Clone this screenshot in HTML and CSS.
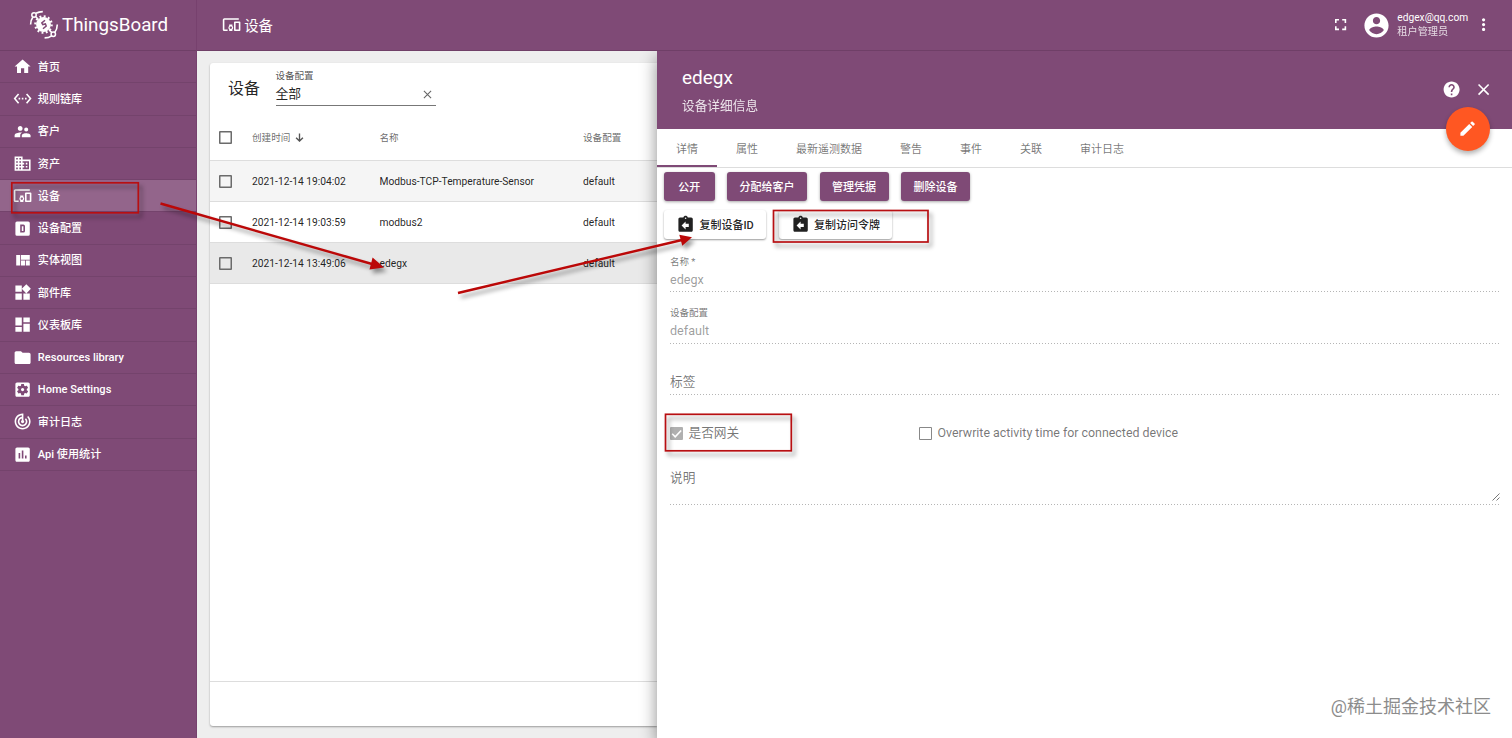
FILE: index.html
```
<!DOCTYPE html>
<html lang="zh-CN">
<head>
    <meta charset="UTF-8">
    <meta name="viewport" content="width=device-width, initial-scale=1.0">
    <title>ThingsBoard | 设备</title>
    <link rel="stylesheet" href="styles.css">
</head>
<body>
    <div class="app">
        <aside class="sidebar">
            <div class="logo">
                <svg class="logo-mark" viewBox="0 0 30 30" fill="none" stroke="#fff">
                    <circle cx="14.5" cy="14.5" r="7.4" fill="#fff" stroke="none"/>
                    <circle cx="14.5" cy="14.5" r="8.2" stroke-width="2.2" stroke-dasharray="1.9 2.39"/>
                    <path d="M16 10.2l-3.200 2.800 1 1.600 2.600-.6.8 2-3.200 2.800" stroke="#7f4a76" stroke-width="1.5"/>
                    <path d="M1.600 14.500c0-2.800.6-5 2.200-7.200M7 3.300c2-1.200 4-1.700 6.800-1.700M28.300 14.500c0 3-.8 5.600-2.600 8M22.600 25.800c-2 1.500-4.200 2.100-7 2.100" stroke-width="1.6"/>
                    <circle cx="5" cy="5" r="2.200" stroke-width="1.500"/>
                    <circle cx="24.300" cy="24.200" r="2.200" stroke-width="1.500"/>
                    <path d="M6.800 6.700l2.500 2.500M22.600 22.400l-2.500-2.500" stroke-width="1.500"/>
                </svg>
                <span>ThingsBoard</span>
            </div>
            <nav class="menu">
                <a class="menu-item">
                    <svg class="icon" viewBox="0 0 24 24"><path d="M10 20v-6h4v6h5v-8h3L12 3 2 12h3v8z"/></svg>
                    <span>首页</span>
                </a>
                <a class="menu-item">
                    <svg class="icon" viewBox="0 0 24 24"><path d="M7.770 6.760L6.230 5.480.820 12l5.410 6.520 1.540-1.280L3.420 12l4.350-5.240zM7 13h2v-2H7v2zm10-2h-2v2h2v-2zm-6 2h2v-2h-2v2zm6.770-7.520l-1.540 1.280L20.580 12l-4.350 5.240 1.540 1.280L23.180 12l-5.410-6.520z"/></svg>
                    <span>规则链库</span>
                </a>
                <a class="menu-item">
                    <svg class="icon" viewBox="0 0 24 24"><path d="M16.500 12c1.380 0 2.490-1.120 2.490-2.500S17.880 7 16.500 7C15.120 7 14 8.120 14 9.500s1.120 2.500 2.500 2.500zM9 11c1.660 0 2.990-1.340 2.990-3S10.660 5 9 5C7.340 5 6 6.340 6 8s1.340 3 3 3zm7.500 3c-1.830 0-5.500.920-5.500 2.750V19h11v-2.250c0-1.830-3.670-2.750-5.500-2.750zM9 13c-2.330 0-7 1.170-7 3.500V19h7v-2.250c0-.850.330-2.340 2.370-3.470C10.500 13.100 9.660 13 9 13z"/></svg>
                    <span>客户</span>
                </a>
                <a class="menu-item">
                    <svg class="icon" viewBox="0 0 24 24"><path d="M12 7V3H2v18h20V7H12zM6 19H4v-2h2v2zm0-4H4v-2h2v2zm0-4H4V9h2v2zm0-4H4V5h2v2zm4 12H8v-2h2v2zm0-4H8v-2h2v2zm0-4H8V9h2v2zm0-4H8V5h2v2zm10 12h-8v-2h2v-2h-2v-2h2v-2h-2V9h8v10zm-2-8h-2v2h2v-2zm0 4h-2v2h2v-2z"/></svg>
                    <span>资产</span>
                </a>
                <a class="menu-item active">
                    <svg class="icon" viewBox="0 0 24 24"><path d="M3 6h18V4H3c-1.100 0-2 .9-2 2v12c0 1.100.9 2 2 2h4v-2H3V6zm10 6H9v1.780c-.610.550-1 1.330-1 2.220s.390 1.670 1 2.220V20h4v-1.780c.610-.550 1-1.340 1-2.220s-.390-1.670-1-2.220V12zm-2 5.500c-.830 0-1.500-.670-1.500-1.500s.670-1.500 1.500-1.500 1.500.670 1.500 1.500-.670 1.500-1.500 1.500zM22 8h-6c-.5 0-1 .5-1 1v10c0 .5.5 1 1 1h6c.5 0 1-.5 1-1V9c0-.5-.5-1-1-1zm-1 10h-4v-8h4v8z"/></svg>
                    <span>设备</span>
                </a>
                <a class="menu-item">
                    <svg class="icon" viewBox="0 0 24 24"><path fill-rule="evenodd" d="M5 3h14a2 2 0 0 1 2 2v14a2 2 0 0 1-2 2H5a2 2 0 0 1-2-2V5a2 2 0 0 1 2-2zm4 4v10h4a2 2 0 0 0 2-2V9a2 2 0 0 0-2-2H9zm2 2h2v6h-2V9z"/></svg>
                    <span>设备配置</span>
                </a>
                <a class="menu-item">
                    <svg class="icon" viewBox="0 0 24 24"><path d="M10 18h5v-6h-5v6zm-6 0h5V5H4v13zm12 0h5v-6h-5v6zM10 5v6h11V5H10z"/></svg>
                    <span>实体视图</span>
                </a>
                <a class="menu-item">
                    <svg class="icon" viewBox="0 0 24 24"><path d="M13 13v8h8v-8h-8zM3 21h8v-8H3v8zM3 3v8h8V3H3zm13.660-1.310L11 7.340 16.660 13l5.660-5.660-5.660-5.650z"/></svg>
                    <span>部件库</span>
                </a>
                <a class="menu-item">
                    <svg class="icon" viewBox="0 0 24 24"><path d="M3 13h8V3H3v10zm0 8h8v-6H3v6zm10 0h8V11h-8v10zm0-18v6h8V3h-8z"/></svg>
                    <span>仪表板库</span>
                </a>
                <a class="menu-item latin">
                    <svg class="icon" viewBox="0 0 24 24"><path d="M10 4H4c-1.100 0-1.990.9-1.990 2L2 18c0 1.100.9 2 2 2h16c1.100 0 2-.9 2-2V8c0-1.100-.9-2-2-2h-8l-2-2z"/></svg>
                    <span>Resources library</span>
                </a>
                <a class="menu-item latin">
                    <svg class="icon" viewBox="0 0 24 24"><path d="M12 10c-1.100 0-2 .9-2 2s.9 2 2 2 2-.9 2-2-.9-2-2-2zm7-7H5c-1.110 0-2 .9-2 2v14c0 1.100.890 2 2 2h14c1.110 0 2-.9 2-2V5c0-1.100-.890-2-2-2zm-1.750 9c0 .230-.020.460-.050.680l1.480 1.160c.130.110.170.300.080.450l-1.400 2.420c-.090.150-.270.210-.430.150l-1.740-.700c-.360.280-.760.510-1.180.690l-.260 1.850c-.030.170-.180.300-.350.300h-2.800c-.170 0-.320-.130-.350-.290l-.260-1.850c-.430-.180-.820-.410-1.180-.690l-1.740.700c-.160.060-.340 0-.430-.150l-1.400-2.420c-.090-.150-.050-.340.080-.450l1.480-1.160c-.030-.230-.050-.460-.050-.690s.020-.460.050-.680l-1.480-1.160c-.130-.110-.170-.300-.080-.450l1.400-2.420c.090-.150.270-.210.430-.150l1.740.700c.360-.280.760-.510 1.180-.690l.260-1.850c.030-.170.180-.300.350-.300h2.800c.170 0 .320.130.350.290l.260 1.850c.430.180.820.410 1.180.690l1.740-.700c.160-.060.340 0 .430.150l1.400 2.420c.090.150.050.340-.080.450l-1.480 1.160c.030.230.050.460.050.690z"/></svg>
                    <span>Home Settings</span>
                </a>
                <a class="menu-item">
                    <svg class="icon" viewBox="0 0 24 24"><path d="M19.070 4.930l-1.410 1.410C19.100 7.790 20 9.790 20 12c0 4.420-3.580 8-8 8s-8-3.580-8-8c0-4.080 3.050-7.440 7-7.930v2.020C8.160 6.570 6 9.030 6 12c0 3.310 2.690 6 6 6s6-2.690 6-6c0-1.660-.670-3.160-1.760-4.240l-1.410 1.410C15.550 9.900 16 10.900 16 12c0 2.210-1.790 4-4 4s-4-1.790-4-4c0-1.860 1.280-3.410 3-3.860v2.140c-.6.350-1 .980-1 1.720 0 1.100.9 2 2 2s2-.9 2-2c0-.740-.4-1.380-1-1.720V2h-1C6.480 2 2 6.480 2 12s4.480 10 10 10 10-4.480 10-10c0-2.760-1.120-5.260-2.930-7.070z"/></svg>
                    <span>审计日志</span>
                </a>
                <a class="menu-item">
                    <svg class="icon" viewBox="0 0 24 24"><path d="M19 3H5c-1.100 0-2 .9-2 2v14c0 1.100.9 2 2 2h14c1.100 0 2-.9 2-2V5c0-1.100-.9-2-2-2zM9 17H7v-7h2v7zm4 0h-2V7h2v10zm4 0h-2v-4h2v4z"/></svg>
                    <span>Api 使用统计</span>
                </a>
            </nav>
        </aside>

        <div class="main">
            <header class="topbar">
                <div class="breadcrumb">
                    <svg class="icon" viewBox="0 0 24 24"><path d="M3 6h18V4H3c-1.100 0-2 .9-2 2v12c0 1.100.9 2 2 2h4v-2H3V6zm10 6H9v1.780c-.610.550-1 1.330-1 2.220s.390 1.670 1 2.220V20h4v-1.780c.610-.550 1-1.340 1-2.220s-.390-1.670-1-2.220V12zm-2 5.500c-.830 0-1.500-.670-1.500-1.500s.670-1.500 1.500-1.500 1.500.670 1.500 1.500-.670 1.500-1.500 1.500zM22 8h-6c-.5 0-1 .5-1 1v10c0 .5.5 1 1 1h6c.5 0 1-.5 1-1V9c0-.5-.5-1-1-1zm-1 10h-4v-8h4v8z"/></svg>
                    <span>设备</span>
                </div>
                <div class="user-bar">
                    <svg class="icon fullscreen" viewBox="0 0 24 24"><path d="M7 14H5v5h5v-2H7v-3zm-2-4h2V7h3V5H5v5zm12 7h-3v2h5v-5h-2v3zM14 5v2h3v3h2V5h-5z"/></svg>
                    <svg class="avatar" viewBox="0 0 24 24"><path d="M12 2C6.480 2 2 6.480 2 12s4.480 10 10 10 10-4.480 10-10S17.520 2 12 2zm0 3c1.660 0 3 1.340 3 3s-1.340 3-3 3-3-1.340-3-3 1.340-3 3-3zm0 14.200c-2.500 0-4.710-1.280-6-3.220.030-1.990 4-3.080 6-3.080 1.990 0 5.970 1.090 6 3.080-1.290 1.940-3.500 3.220-6 3.220z"/></svg>
                    <div class="user-info">
                        <span>edgex@qq.com</span>
                        <span class="role">租户管理员</span>
                    </div>
                    <svg class="icon" viewBox="0 0 24 24"><path d="M12 8c1.100 0 2-.9 2-2s-.9-2-2-2-2 .9-2 2 .9 2 2 2zm0 2c-1.100 0-2 .9-2 2s.9 2 2 2 2-.9 2-2-.9-2-2-2zm0 6c-1.100 0-2 .9-2 2s.9 2 2 2 2-.9 2-2-.9-2-2-2z"/></svg>
                </div>
            </header>

            <div class="content">
                <section class="list">
                    <div class="card">
                        <div class="card-header">
                            <h2>设备</h2>
                            <div class="profile-filter">
                                <label>设备配置</label>
                                <div class="filter-value">
                                    <span>全部</span>
                                    <svg class="clear" viewBox="0 0 10 10"><path d="M1 1l8 8M9 1l-8 8"/></svg>
                                </div>
                            </div>
                        </div>
                        <div class="row head">
                            <span class="checkbox"></span>
                            <span class="sorted">创建时间
                                <svg class="arrow" viewBox="0 0 10 10"><path d="M5 .5v8.300M1.200 5.200L5 9l3.800-3.800"/></svg>
                            </span>
                            <span>名称</span>
                            <span>设备配置</span>
                        </div>
                        <div class="row hover">
                            <span class="checkbox"></span>
                            <span>2021-12-14 19:04:02</span>
                            <span>Modbus-TCP-Temperature-Sensor</span>
                            <span>default</span>
                        </div>
                        <div class="row">
                            <span class="checkbox"></span>
                            <span>2021-12-14 19:03:59</span>
                            <span>modbus2</span>
                            <span>default</span>
                        </div>
                        <div class="row current">
                            <span class="checkbox"></span>
                            <span>2021-12-14 13:49:06</span>
                            <span>edegx</span>
                            <span>default</span>
                        </div>
                        <div class="paginator"></div>
                    </div>
                </section>

                <section class="details">
                    <div class="details-header">
                        <div class="details-title">
                            <h3>edegx</h3>
                            <p>设备详细信息</p>
                        </div>
                        <div class="details-actions">
                            <svg class="icon" viewBox="0 0 24 24"><path d="M12 2C6.480 2 2 6.480 2 12s4.480 10 10 10 10-4.480 10-10S17.520 2 12 2zm1 17h-2v-2h2v2zm2.070-7.750l-.9.920C13.450 12.900 13 13.500 13 15h-2v-.5c0-1.100.450-2.100 1.170-2.830l1.240-1.260c.370-.360.590-.860.590-1.410 0-1.100-.9-2-2-2s-2 .9-2 2H8c0-2.210 1.790-4 4-4s4 1.790 4 4c0 .880-.360 1.680-.930 2.250z"/></svg>
                            <svg class="icon" viewBox="0 0 24 24"><path d="M19 6.410L17.590 5 12 10.590 6.410 5 5 6.410 10.590 12 5 17.590 6.410 19 12 13.410 17.590 19 19 17.590 13.410 12z"/></svg>
                        </div>
                        <button class="fab">
                            <svg class="icon" viewBox="0 0 24 24"><path d="M3 17.250V21h3.750L17.810 9.940l-3.750-3.750L3 17.250zM20.710 7.040c.390-.390.390-1.020 0-1.410l-2.340-2.340c-.390-.390-1.020-.390-1.410 0l-1.830 1.830 3.750 3.750 1.830-1.830z"/></svg>
                        </button>
                    </div>
                    <div class="tabs">
                        <span class="tab selected">详情</span>
                        <span class="tab">属性</span>
                        <span class="tab">最新遥测数据</span>
                        <span class="tab">警告</span>
                        <span class="tab">事件</span>
                        <span class="tab">关联</span>
                        <span class="tab">审计日志</span>
                    </div>
                    <div class="buttons">
                        <button class="btn">公开</button>
                        <button class="btn">分配给客户</button>
                        <button class="btn">管理凭据</button>
                        <button class="btn">删除设备</button>
                    </div>
                    <div class="buttons copy">
                        <button class="btn light">
                            <svg class="icon" viewBox="0 0 24 24"><path d="M19 3h-4.180C14.400 1.840 13.300 1 12 1s-2.400.840-2.820 2H5c-1.100 0-2 .9-2 2v14c0 1.100.9 2 2 2h14c1.100 0 2-.9 2-2V5c0-1.100-.9-2-2-2zm-7 0c.550 0 1 .450 1 1s-.450 1-1 1-1-.450-1-1 .450-1 1-1zm4 12h-4v3l-5-5 5-5v3h4v4z"/></svg>
                            <span>复制设备ID</span>
                        </button>
                        <button class="btn light">
                            <svg class="icon" viewBox="0 0 24 24"><path d="M19 3h-4.180C14.400 1.840 13.300 1 12 1s-2.400.840-2.820 2H5c-1.100 0-2 .9-2 2v14c0 1.100.9 2 2 2h14c1.100 0 2-.9 2-2V5c0-1.100-.9-2-2-2zm-7 0c.550 0 1 .450 1 1s-.450 1-1 1-1-.450-1-1 .450-1 1-1zm4 12h-4v3l-5-5 5-5v3h4v4z"/></svg>
                            <span>复制访问令牌</span>
                        </button>
                    </div>
                    <div class="form">
                        <div class="field">
                            <label>名称 *</label>
                            <span class="value">edegx</span>
                        </div>
                        <div class="field">
                            <label>设备配置</label>
                            <span class="value">default</span>
                        </div>
                        <div class="field">
                            <span class="placeholder">标签</span>
                        </div>
                        <div class="options">
                            <div class="option"><span class="checkbox checked"><svg viewBox="0 0 12 12"><path d="M2 6.200l2.800 2.800L10.300 3.200"/></svg></span><span>是否网关</span></div>
                            <div class="option overwrite"><span class="checkbox"></span><span>Overwrite activity time for connected device</span></div>
                        </div>
                        <div class="field note">
                            <span class="placeholder">说明</span>
                            <svg class="grip" viewBox="0 0 8 8"><path d="M.5 7.500l7-7M4.500 7.500l3-3"/></svg>
                        </div>
                    </div>
                    <div class="watermark">@稀土掘金技术社区</div>
                </section>
            </div>
        </div>
    </div>

    <!-- step markers drawn over the screen -->
    <svg class="marks" viewBox="0 0 1512 738">
        <g class="mark-box">
            <rect x="11.800" y="182.800" width="126.500" height="30"/>
            <rect x="773.500" y="210.500" width="154.500" height="31.500"/>
            <rect x="665.500" y="414.300" width="125.800" height="36.500"/>
        </g>
        <g class="mark-arrow">
            <path d="M160.500 203.500L372 264"/>
            <path class="tip" d="M384 267.500L369.500 269.500 372.600 257.500z"/>
            <path d="M458 293L682 240"/>
            <path class="tip" d="M692 237.300L682.300 245.800 679.300 234.800z"/>
        </g>
    </svg>
</body>
</html>
```
FILE: styles.css
```
* {
    box-sizing: border-box;
}
body {
    margin: 0;
    font-family: Roboto, "Noto Sans CJK SC", sans-serif;
    font-size: 11px;
    color: rgba(0, 0, 0, 0.87);
    overflow: hidden;
}
h2, h3, p {
    margin: 0;
    font-weight: 400;
}
button {
    font-family: inherit;
    border: none;
    padding: 0;
}
.app {
    display: flex;
    width: 1512px;
    height: 738px;
}
.icon {
    width: 19.2px;
    height: 19.2px;
    fill: currentColor;
    flex: none;
}

/* sidebar */
.sidebar {
    width: 197px;
    flex: none;
    background: #7f4a76;
    color: #fff;
    border-right: 1px solid #77416e;
}
.logo {
    height: 51px;
    display: flex;
    align-items: center;
    gap: 3px;
    padding-left: 29px;
    border-bottom: 1px solid #6f3f67;
    font-size: 18.8px;
}
.logo-mark {
    width: 30px;
    height: 30px;
}
.menu-item {
    display: flex;
    align-items: center;
    gap: 6px;
    height: 32.3px;
    padding-left: 12.6px;
    border-bottom: 1px solid #74436c;
    font-size: 11.1px;
    font-weight: 500;
}
.menu-item span {
    padding-bottom: 2px;
}
.menu-item.latin span {
    padding-bottom: 0;
}
.menu-item.active {
    background: #93658b;
}

/* top bar */
.main {
    flex: 1;
    min-width: 0;
    display: flex;
    flex-direction: column;
}
.topbar {
    height: 51px;
    flex: none;
    display: flex;
    align-items: center;
    justify-content: space-between;
    padding: 0 19px 0 25px;
    background: #7f4a76;
    color: #fff;
    border-bottom: 1px solid #6f3f67;
}
.breadcrumb {
    display: flex;
    align-items: center;
    gap: 3px;
    font-size: 14.4px;
}
.breadcrumb span {
    padding-bottom: 2px;
}
.user-bar {
    display: flex;
    align-items: center;
}
.fullscreen {
    margin-right: 12px;
}
.avatar {
    width: 29px;
    height: 29px;
    fill: #fff;
    margin-right: 6px;
}
.user-info {
    display: flex;
    flex-direction: column;
    width: 76.5px;
    font-size: 10.2px;
    line-height: 14.5px;
}
.role {
    opacity: 0.8;
}

/* device list */
.content {
    flex: 1;
    display: flex;
    min-height: 0;
    background: #eee;
}
.list {
    width: 460px;
    flex: none;
    padding: 12px 0 12px 13px;
}
.card {
    height: 663px;
    display: flex;
    flex-direction: column;
    background: #fff;
    border-radius: 3px 0 0 3px;
    box-shadow: 0 1px 2px rgba(0, 0, 0, 0.35);
}
.card-header {
    display: flex;
    height: 51px;
    padding-left: 18px;
}
.card-header h2 {
    width: 47.5px;
    font-size: 16px;
    line-height: 52px;
}
.profile-filter {
    width: 160px;
    height: 43px;
    padding-top: 5px;
    border-bottom: 1px solid #777;
}
.profile-filter label {
    display: block;
    font-size: 9.5px;
    line-height: 15px;
    color: rgba(0, 0, 0, 0.7);
}
.filter-value {
    display: flex;
    align-items: center;
    justify-content: space-between;
    padding-right: 4px;
    font-size: 12.8px;
    line-height: 22px;
}
.clear {
    width: 9px;
    height: 9px;
    stroke: #666;
    stroke-width: 1.2;
}
.row {
    display: grid;
    grid-template-columns: 33px 127.5px 203.5px 1fr;
    align-items: center;
    height: 41px;
    padding-left: 9px;
    border-bottom: 1px solid #ddd;
    font-size: 10.25px;
}
.row.head {
    height: 47px;
    font-size: 9.6px;
    color: rgba(0, 0, 0, 0.6);
}
.row.hover {
    background: #f5f5f5;
}
.row.current {
    background: #e9e9e9;
}
.sorted {
    display: flex;
    align-items: center;
    gap: 5px;
}
.arrow {
    width: 9px;
    height: 9px;
    fill: none;
    stroke: #555;
    stroke-width: 1.5;
}
.checkbox {
    flex: none;
    width: 13px;
    height: 13px;
    box-shadow: inset 0 0 0 1.5px #6b6b6b;
    border-radius: 1px;
}
.paginator {
    height: 45px;
    margin-top: auto;
    border-top: 1px solid #ddd;
}

/* details panel */
.details {
    flex: 1;
    min-width: 0;
    display: flex;
    flex-direction: column;
    position: relative;
    background: #fff;
    box-shadow: 0 6px 16px rgba(0, 0, 0, 0.45);
    clip-path: inset(0 0 0 -30px);
}
.details-header {
    display: flex;
    justify-content: space-between;
    height: 78px;
    padding: 14px 19px 0 25px;
    background: #7f4a76;
    color: #fff;
    position: relative;
}
.details-title h3 {
    font-size: 19px;
    line-height: 26px;
}
.details-title p {
    margin-top: 6px;
    font-size: 12.7px;
    line-height: 18px;
    opacity: 0.85;
}
.details-actions {
    display: flex;
    gap: 12.5px;
    padding-top: 15px;
}
.fab {
    position: absolute;
    right: 22px;
    bottom: -22px;
    display: flex;
    align-items: center;
    justify-content: center;
    width: 44px;
    height: 44px;
    border-radius: 50%;
    background: #ff5722;
    color: #fff;
    box-shadow: 0 3px 5px rgba(0, 0, 0, 0.3);
}
.tabs {
    display: flex;
    height: 39px;
    flex: none;
    border-bottom: 1px solid #ddd;
}
.tab {
    padding: 0 19px;
    line-height: 41px;
    height: 38px;
    color: rgba(0, 0, 0, 0.55);
}
.tab.selected {
    border-bottom: 2px solid #7f4a76;
}
.buttons {
    display: flex;
    gap: 12.5px;
    padding: 4px 7px 0;
}
.btn {
    display: flex;
    align-items: center;
    justify-content: center;
    height: 29px;
    min-width: 50.5px;
    padding: 0 12.5px 2px;
    border-radius: 3px;
    background: #7f4a76;
    color: #fff;
    font-size: 11px;
    font-weight: 500;
    box-shadow: 0 1px 3px rgba(0, 0, 0, 0.35);
}
.copy {
    padding-top: 9px;
}
.btn.light {
    gap: 4px;
    padding: 0 12.3px;
    background: #fff;
    color: rgba(0, 0, 0, 0.87);
    box-shadow: 0 1px 2px rgba(0, 0, 0, 0.4);
}
.btn.light span {
    padding-bottom: 2px;
}
.form {
    padding: 13px 12px 0 13px;
    color: rgba(0, 0, 0, 0.55);
}
.field {
    height: 51.5px;
    padding-top: 12px;
    background: repeating-linear-gradient(90deg, #b5b5b5 0 1px, transparent 1px 3px) left bottom / 100% 1px no-repeat;
}
.field:first-child {
    height: 40px;
    padding-top: 1px;
}
.field label {
    display: block;
    font-size: 9.5px;
    line-height: 18px;
}
.field .value {
    display: block;
    font-size: 12.6px;
    line-height: 18px;
    color: rgba(0, 0, 0, 0.4);
}
.placeholder {
    display: block;
    padding-top: 17px;
    font-size: 12.7px;
    line-height: 18px;
}
.options {
    display: flex;
    align-items: center;
    height: 76px;
}
.option {
    display: flex;
    align-items: center;
    gap: 5.5px;
    width: 249px;
    font-size: 12.7px;
    line-height: 16px;
    white-space: nowrap;
}
.option span:last-child {
    padding-bottom: 1px;
}
.option.overwrite {
    font-size: 12.4px;
}
.options .checkbox {
    box-shadow: inset 0 0 0 1px #888;
}
.options .checkbox.checked {
    display: flex;
    background: #b0b0b0;
    box-shadow: none;
}
.checked svg {
    fill: none;
    stroke: #fff;
    stroke-width: 1.5;
}
.field.note {
    display: flex;
    justify-content: space-between;
    height: 34px;
    padding-top: 0;
}
.note .placeholder {
    padding-top: 0;
    margin-top: -2px;
}
.grip {
    width: 8px;
    height: 8px;
    margin-top: 22px;
    stroke: #777;
}
.watermark {
    margin: auto 21px 18px auto;
    font-size: 18px;
    line-height: 26px;
    color: #8c8c8c;
}

/* markers */
.marks {
    position: absolute;
    left: 0;
    top: 0;
    width: 1512px;
    height: 738px;
    pointer-events: none;
    filter: drop-shadow(3px 4px 2px rgba(0, 0, 0, 0.4));
}
.mark-box {
    fill: none;
    stroke: #b80f12;
    stroke-width: 1.7;
}
.mark-arrow {
    fill: none;
    stroke: #bb0808;
    stroke-width: 2.4;
}
.mark-arrow .tip {
    fill: #bb0808;
    stroke: none;
}
```
